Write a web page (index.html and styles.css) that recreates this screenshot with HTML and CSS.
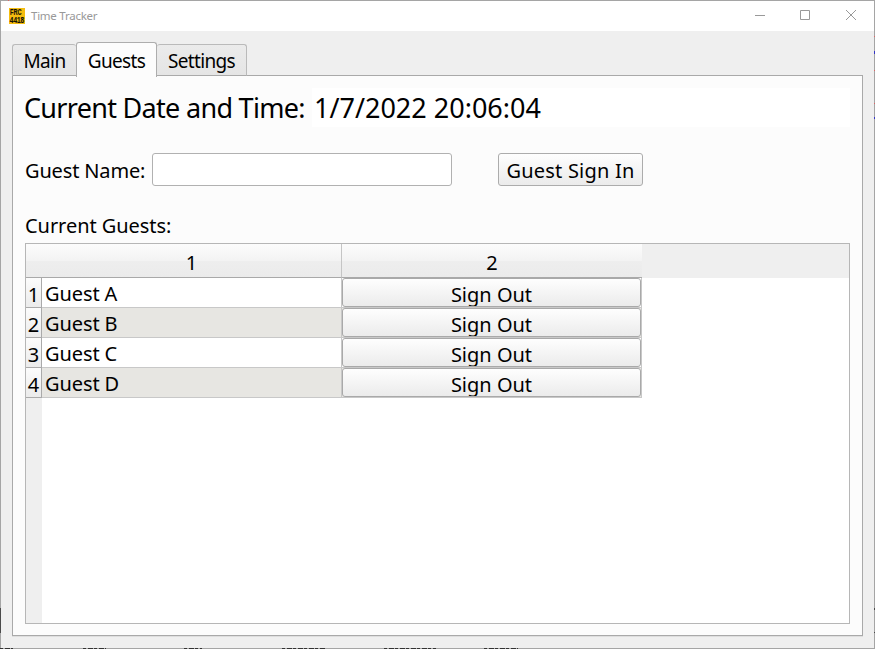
FILE: index.html
```html
<!DOCTYPE html>
<html lang="en">
<head>
<meta charset="utf-8">
<title>Time Tracker</title>
<link rel="stylesheet" href="styles.css">
</head>
<body>
<div class="window">
  <header class="titlebar">
    <svg class="logo" width="16" height="16" viewBox="0 0 16 16"><rect width="16" height="16" fill="#f5bd10"/><g fill="#161305" font-family="Liberation Sans Narrow, Liberation Sans" font-weight="bold" font-size="9.2" stroke="#161305" stroke-width=".2"><text x="1" y="7.2" textLength="11.5" lengthAdjust="spacingAndGlyphs">FRC</text><text x="0.8" y="15.2" textLength="14.4" lengthAdjust="spacingAndGlyphs">4418</text></g></svg>
    <span class="title">Time Tracker</span>
    <svg class="controls" width="120" height="30" viewBox="0 0 120 30" fill="none" stroke="#999"><path d="M0 14.5h10M45.5 9.5h9v9h-9zM91 9l10 10M101 9l-10 10"/></svg>
  </header>
  <nav class="tabs">
    <div class="tab tab-main"><span>Main</span></div>
    <div class="tab tab-guests"><span>Guests</span></div>
    <div class="tab tab-settings"><span>Settings</span></div>
  </nav>
  <main class="panel">
    <div class="clock"><span class="clock-label">Current Date and Time:</span><div class="clock-value"><span>1/7/2022 20:06:04</span></div></div>
    <div class="form"><label class="name-label" for="guest">Guest Name:</label><input id="guest" class="name"><button class="sign-in"><span>Guest Sign In</span></button></div>
    <div class="caption"><span>Current Guests:</span></div>
    <div class="table">
      <div class="head"><div class="col-one">1</div><div class="col-two">2</div></div>
      <div class="body">
        <div class="row"><div class="num">1</div><div class="guest">Guest A</div><div class="action"><button class="out">Sign Out</button></div></div>
        <div class="row alt"><div class="num">2</div><div class="guest">Guest B</div><div class="action"><button class="out">Sign Out</button></div></div>
        <div class="row"><div class="num">3</div><div class="guest">Guest C</div><div class="action"><button class="out">Sign Out</button></div></div>
        <div class="row alt"><div class="num">4</div><div class="guest">Guest D</div><div class="action"><button class="out">Sign Out</button></div></div>
      </div>
    </div>
  </main>
  <svg class="edge" width="875" height="649" viewBox="0 0 875 649" fill="none"><path stroke="#333" stroke-dasharray="3 2 5 1" d="M0 648.5h13M83 648.5h23M184 648.5h18M282 648.5h44M384 648.5h52M484 648.5h34"/><path stroke="#4a4a4a" d="M.5 608v25M874.5 608v2M874.5 632v1"/><path stroke="#3434c8" d="M874.5 51v3M874.5 117v2"/><path stroke="#d66" d="M874.5 36v1M874.5 70v1M874.5 103v1M8 .5h1"/></svg>
</div>
</body>
</html>
```
FILE: styles.css
```css
* { box-sizing: border-box; }
body { margin: 0; overflow: hidden; font: 20px/30px "Noto Sans", sans-serif; color: #000; }
button, input { font: inherit; color: inherit; padding: 0; }
span, label { white-space: nowrap; }
.window { position: relative; width: 875px; height: 649px; border: 1px solid #a5a5a5; background: #efefef; display: flex; flex-direction: column; }
.edge { position: absolute; left: -1px; top: -1px; pointer-events: none; }
.titlebar { height: 30px; background: #fff; display: flex; align-items: center; padding-left: 8px; flex: none; }
.logo { margin-top: -1px; overflow: visible; }
.title { font-size: 11.5px; letter-spacing: -.25px; color: #999; margin-left: 6px; }
.controls { margin-left: auto; margin-right: -1px; }
.tabs { display: flex; align-items: flex-end; height: 45px; padding-left: 11px; margin-bottom: -1px; flex: none; z-index: 1; }
.tab { display: flex; justify-content: center; height: 32px; border: 1px solid #bababa; border-radius: 3px 3px 0 0; background: linear-gradient(#ebebeb, #e5e5e5); border-bottom-color: #aaa; line-height: 33px; font-size: 19px; letter-spacing: -.65px; }
.tab-main { width: 64px; border-right: 0; }
.tab-guests { width: 81px; height: 35px; margin-bottom: -1px; background: #fcfcfc; border-color: #adadad; border-bottom: 0; line-height: 36px; }
.tab-settings { width: 90px; border-left: 0; }
.panel { width: 851px; height: 561px; margin-left: 11px; flex: none; background: #fcfcfc; border: 1px solid #a9a9a9; box-shadow: 0 1px #dedede; padding: 12px 12px 11px; display: flex; flex-direction: column; }
.clock { display: flex; height: 39px; flex: none; font-size: 27px; line-height: 40px; }
.clock-label { width: 287px; letter-spacing: -.7px; margin-left: -1px; margin-right: 1px; }
.clock-value { flex: 1; background: #fff; padding-left: 2px; }
.form { display: flex; height: 33px; margin-top: 26px; flex: none; line-height: 36px; }
.name-label { width: 127px; letter-spacing: -.15px; }
.name { width: 300px; border: 1px solid #b1b1b1; border-radius: 3px; background: #fff; }
.sign-in { width: 145px; margin-left: 46px; border: 1px solid #acacac; border-radius: 3px; background: linear-gradient(#fefefe, #ebebeb); line-height: 31px; padding-top: 1px; letter-spacing: .2px; }
.caption { height: 37px; margin-top: 20px; flex: none; line-height: 40px; letter-spacing: -.05px; }
.table { width: 825px; height: 381px; flex: none; border: 1px solid #b6b6b6; background: #fff; display: flex; flex-direction: column; }
.head { display: flex; height: 34px; background: #efefef; flex: none; line-height: 37px; text-align: center; }
.col-one, .col-two { background: linear-gradient(#fcfcfc, #f3f3f3 50%, #eee 51%, #ebebeb); border-bottom: 1px solid #a9a9a9; }
.col-one { width: 316px; padding-left: 16px; border-right: 1px solid #c5c5c5; }
.col-two { width: 300px; }
.body { flex: 1; background: linear-gradient(#efefef, #efefef) left / 16px 100% no-repeat; }
.row { display: flex; width: 616px; height: 30px; background: #fff; }
.alt { background: #e7e6e2; }
.num { width: 16px; border-right: 1px solid #aaa; border-bottom: 1px solid #aaa; background: linear-gradient(#fcfcfc, #ebebeb); line-height: 33px; text-align: center; }
.guest { width: 300px; padding-left: 3px; border-right: 1px solid #c8c8c8; border-bottom: 1px solid #c8c8c8; line-height: 31px; letter-spacing: -.1px; }
.action { width: 300px; border-right: 1px solid #c8c8c8; border-bottom: 1px solid #c8c8c8; }
.out { display: block; width: 299px; height: 29px; border: 1px solid #a9a9a9; border-radius: 3px; background: linear-gradient(#fefefe, #ebebeb); line-height: 31px; overflow: hidden; }
```
